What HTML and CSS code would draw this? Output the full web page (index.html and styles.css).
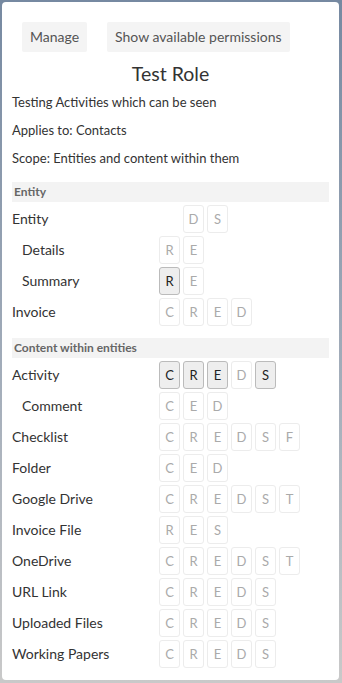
FILE: index.html
```html
<!DOCTYPE html>
<html lang="en">
  <head>
    <meta charset="utf-8" />
    <meta name="viewport" content="width=device-width, initial-scale=1" />
    <link rel="stylesheet" href="styles.css">
    <title>Test Role</title>
  </head>
  <body>
    <main class="card">
      <div class="toolbar">
        <button class="btn">Manage</button>
        <button class="btn">Show available permissions</button>
      </div>
      <h1 class="role-title">Test Role</h1>
      <p class="meta">Testing Activities which can be seen</p>
      <p class="meta">Applies to: Contacts</p>
      <p class="meta">Scope: Entities and content within them</p>

      <section class="perm-group">
        <h2 class="group-title">Entity</h2>
        <div class="perm-row">
          <span class="perm-label">Entity</span>
          <span class="perms">
            <span class="perm is-blank"></span>
            <span class="perm">D</span><span class="perm">S</span>
          </span>
        </div>
        <div class="perm-row is-child">
          <span class="perm-label">Details</span>
          <span class="perms"><span class="perm">R</span><span class="perm">E</span></span>
        </div>
        <div class="perm-row is-child">
          <span class="perm-label">Summary</span>
          <span class="perms"><span class="perm is-on">R</span><span class="perm">E</span></span>
        </div>
        <div class="perm-row">
          <span class="perm-label">Invoice</span>
          <span class="perms">
            <span class="perm">C</span><span class="perm">R</span><span class="perm">E</span><span class="perm">D</span>
          </span>
        </div>
      </section>

      <section class="perm-group">
        <h2 class="group-title">Content within entities</h2>
        <div class="perm-row">
          <span class="perm-label">Activity</span>
          <span class="perms">
            <span class="perm is-on">C</span><span class="perm is-on">R</span><span class="perm is-on">E</span><span class="perm">D</span><span class="perm is-on">S</span>
          </span>
        </div>
        <div class="perm-row is-child">
          <span class="perm-label">Comment</span>
          <span class="perms"><span class="perm">C</span><span class="perm">E</span><span class="perm">D</span></span>
        </div>
        <div class="perm-row">
          <span class="perm-label">Checklist</span>
          <span class="perms">
            <span class="perm">C</span><span class="perm">R</span><span class="perm">E</span><span class="perm">D</span><span class="perm">S</span><span class="perm">F</span>
          </span>
        </div>
        <div class="perm-row">
          <span class="perm-label">Folder</span>
          <span class="perms"><span class="perm">C</span><span class="perm">E</span><span class="perm">D</span></span>
        </div>
        <div class="perm-row">
          <span class="perm-label">Google Drive</span>
          <span class="perms">
            <span class="perm">C</span><span class="perm">R</span><span class="perm">E</span><span class="perm">D</span><span class="perm">S</span><span class="perm">T</span>
          </span>
        </div>
        <div class="perm-row">
          <span class="perm-label">Invoice File</span>
          <span class="perms"><span class="perm">R</span><span class="perm">E</span><span class="perm">S</span></span>
        </div>
        <div class="perm-row">
          <span class="perm-label">OneDrive</span>
          <span class="perms">
            <span class="perm">C</span><span class="perm">R</span><span class="perm">E</span><span class="perm">D</span><span class="perm">S</span><span class="perm">T</span>
          </span>
        </div>
        <div class="perm-row">
          <span class="perm-label">URL Link</span>
          <span class="perms">
            <span class="perm">C</span><span class="perm">R</span><span class="perm">E</span><span class="perm">D</span><span class="perm">S</span>
          </span>
        </div>
        <div class="perm-row">
          <span class="perm-label">Uploaded Files</span>
          <span class="perms">
            <span class="perm">C</span><span class="perm">R</span><span class="perm">E</span><span class="perm">D</span><span class="perm">S</span>
          </span>
        </div>
        <div class="perm-row">
          <span class="perm-label">Working Papers</span>
          <span class="perms">
            <span class="perm">C</span><span class="perm">R</span><span class="perm">E</span><span class="perm">D</span><span class="perm">S</span>
          </span>
        </div>
      </section>
    </main>
  </body>
</html>
```

FILE: styles.css
```css
:root {
  --text: #333;
  --muted: #666;
  --perm-off: #aaa;
  --perm-border: #ececec;
  --group-bg: #f3f3f3;
}

* {
  box-sizing: border-box;
}

html {
  font-family: Lato, "Open Sans", sans-serif;
  font-size: 14px;
  line-height: 1.4;
  color: var(--text);
}

body {
  margin: 0;
  height: 683px;
  padding: 2px 3px 3px 2px;
  background-image: linear-gradient(to bottom, #7689a1 0%, #a3adba 55%, #c9c9c9 100%);
}

.card {
  background: #fff;
  border-radius: 4px;
  height: 100%;
  padding: 10px;
}

/* Top buttons */
.toolbar {
  display: flex;
  gap: 20px;
  padding: 10px 10px 0;
}

.btn {
  font: inherit;
  color: #555;
  background: #f4f4f4;
  border: 0;
  border-radius: 2px;
  height: 30px;
  padding: 0 8px;
}

.role-title {
  font-size: 19.5px;
  font-weight: 400;
  text-align: center;
  margin: 10px 0 2px;
  line-height: 24px;
}

.meta {
  font-size: 13px;
  margin: 0;
  line-height: 28px;
}

/* Permission groups */
.perm-group {
  margin-top: 10px;

  & + .perm-group {
    margin-top: 12px;
  }
}

.group-title {
  background: var(--group-bg);
  color: var(--muted);
  font-size: 12px;
  font-weight: 700;
  line-height: 20px;
  margin: 0 0 3px;
  padding: 0 2px;
}

.perm-row {
  display: flex;
  align-items: center;
  height: 28px;
  margin-bottom: 3px;
  font-size: 14px;

  &.is-child .perm-label {
    padding-left: 10px;
  }
}

.perm-label {
  width: 147px;
  flex: none;
}

.perms {
  display: flex;
  gap: 3px;
}

.perm {
  width: 21px;
  height: 28px;
  display: grid;
  place-items: center;
  border: 1px solid var(--perm-border);
  border-radius: 3px;
  font-size: 13px;
  color: var(--perm-off);

  &.is-on {
    background: #eee;
    border-color: #bbb;
    color: #222;
  }

  &.is-blank {
    visibility: hidden;
  }
}
```
